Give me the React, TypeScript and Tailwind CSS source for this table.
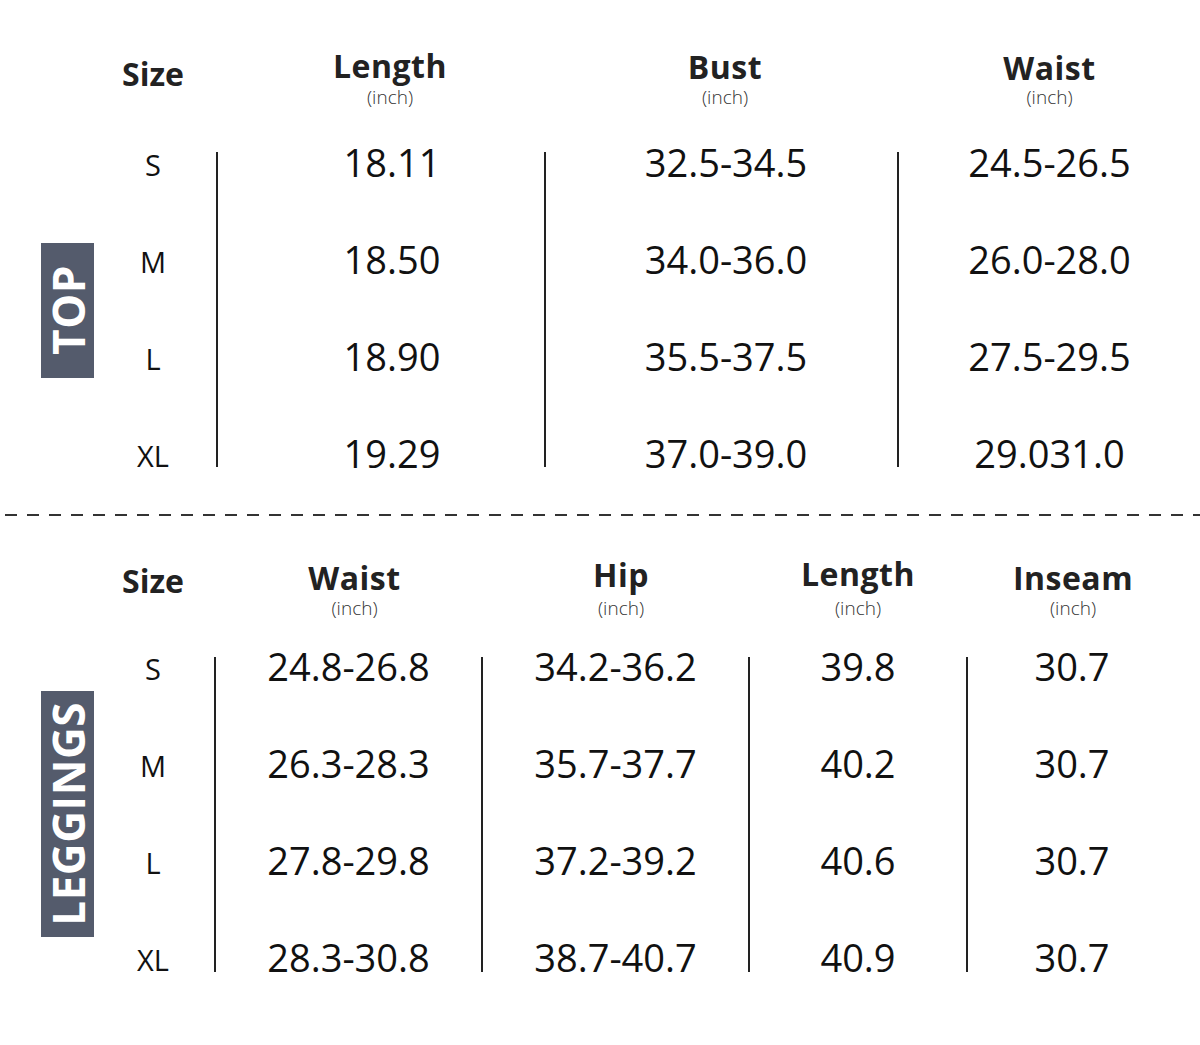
import React from 'react';

type Col = {
  title: string;
  col: string;
  head: string;
  inch: string;
  cell: string;
  values: string[];
};

type SectionProps = {
  label: string;
  labelBox: string;
  grid: string;
  sizeHead: string;
  lines: string[];
  cols: Col[];
};

const sizes = ['S', 'M', 'L', 'XL'];
const rows = ['row-start-2', 'row-start-3', 'row-start-4', 'row-start-5'];

const Section = ({ label, labelBox, grid, sizeHead, lines, cols }: SectionProps) => {
  return (
    <div className={`grid ${grid}`}>
      {/* label */}
      <div className="col-start-1 row-start-2 row-span-4 flex items-center pl-[41px]">
        <div className={`w-[53px] ${labelBox} bg-[#545b6c] flex items-center justify-center`}>
          <span className="[writing-mode:vertical-rl] rotate-180 text-white font-bold text-[44px] leading-none tracking-[0.5px]">
            {label}
          </span>
        </div>
      </div>

      {/* header */}
      <div className={`col-start-2 row-start-1 flex justify-center ${sizeHead}`}>
        <span className="text-[32px] font-bold leading-none text-[#222]">Size</span>
      </div>
      {cols.map((c) => (
        <div key={c.title} className={`${c.col} row-start-1 flex flex-col items-center ${c.head}`}>
          <span className="text-[32px] font-bold leading-none text-[#222] tracking-[0.5px]">{c.title}</span>
          <span className={`${c.inch} text-[19px] font-light leading-none text-[#333]`}>(inch)</span>
        </div>
      ))}

      {/* sizes */}
      {sizes.map((s, i) => (
        <div key={s} className={`col-start-2 ${rows[i]} flex items-center justify-center`}>
          <span className="text-[29px] leading-none text-[#111]">{s}</span>
        </div>
      ))}

      {/* dividers */}
      {lines.map((l) => (
        <div key={l} className={l} />
      ))}

      {/* values */}
      {cols.map((c) =>
        c.values.map((v, i) => (
          <div key={c.title + i} className={`${c.col} ${rows[i]} flex items-center justify-center pb-[5px] ${c.cell}`}>
            <span className="text-[38px] font-medium leading-none text-[#111]">{v}</span>
          </div>
        ))
      )}
    </div>
  );
};

const App = () => {
  return (
    <div className="w-[1200px] h-[1045px] bg-white pt-[40px] font-['Open_Sans',sans-serif]">
      <Section
        label="TOP"
        labelBox="h-[135px]"
        grid="grid-cols-[100px_106px_10px_2px_326px_2px_351px_2px_301px] grid-rows-[76px_97px_97px_97px_97px]"
        sizeHead="pt-[18px]"
        lines={[
          'col-start-4 row-start-2 row-span-4 mt-[36px] mb-[37px] bg-[#222]',
          'col-start-6 row-start-2 row-span-4 mt-[36px] mb-[37px] bg-[#222]',
          'col-start-8 row-start-2 row-span-4 mt-[36px] mb-[37px] bg-[#222]',
        ]}
        cols={[
          { title: 'Length', col: 'col-start-5', head: 'pt-[10px] pl-[18px]', inch: 'mt-[6px]', cell: 'pl-[22px]', values: ['18.11', '18.50', '18.90', '19.29'] },
          { title: 'Bust', col: 'col-start-7', head: 'pt-[11px] pl-[7px]', inch: 'mt-[5px]', cell: 'pl-[9px]', values: ['32.5-34.5', '34.0-36.0', '35.5-37.5', '37.0-39.0'] },
          { title: 'Waist', col: 'col-start-9', head: 'pt-[12px]', inch: 'mt-[4px]', cell: '', values: ['24.5-26.5', '26.0-28.0', '27.5-29.5', '29.031.0'] },
        ]}
      />

      <div className="mt-[10px] ml-[5px] h-[2px] bg-[repeating-linear-gradient(90deg,#333_0_12px,transparent_12px_22px)]" />

      <Section
        label="LEGGINGS"
        labelBox="h-[246px]"
        grid="grid-cols-[100px_106px_8px_2px_265px_2px_265px_2px_216px_2px_232px] grid-rows-[104px_97px_97px_97px_97px]"
        sizeHead="pt-[49px]"
        lines={[
          'col-start-4 row-start-2 row-span-4 mt-[37px] mb-[36px] bg-[#222]',
          'col-start-6 row-start-2 row-span-4 mt-[37px] mb-[36px] bg-[#222]',
          'col-start-8 row-start-2 row-span-4 mt-[37px] mb-[36px] bg-[#222]',
          'col-start-10 row-start-2 row-span-4 mt-[37px] mb-[36px] bg-[#222]',
        ]}
        cols={[
          { title: 'Waist', col: 'col-start-5', head: 'pt-[46px] pl-[12px]', inch: 'mt-[5px]', cell: '', values: ['24.8-26.8', '26.3-28.3', '27.8-29.8', '28.3-30.8'] },
          { title: 'Hip', col: 'col-start-7', head: 'pt-[43px] pl-[11px]', inch: 'mt-[8px]', cell: '', values: ['34.2-36.2', '35.7-37.7', '37.2-39.2', '38.7-40.7'] },
          { title: 'Length', col: 'col-start-9', head: 'pt-[42px]', inch: 'mt-[9px]', cell: '', values: ['39.8', '40.2', '40.6', '40.9'] },
          { title: 'Inseam', col: 'col-start-11', head: 'pt-[46px] pr-[22px]', inch: 'mt-[5px]', cell: 'pr-[24px]', values: ['30.7', '30.7', '30.7', '30.7'] },
        ]}
      />
    </div>
  );
};

export default App;
